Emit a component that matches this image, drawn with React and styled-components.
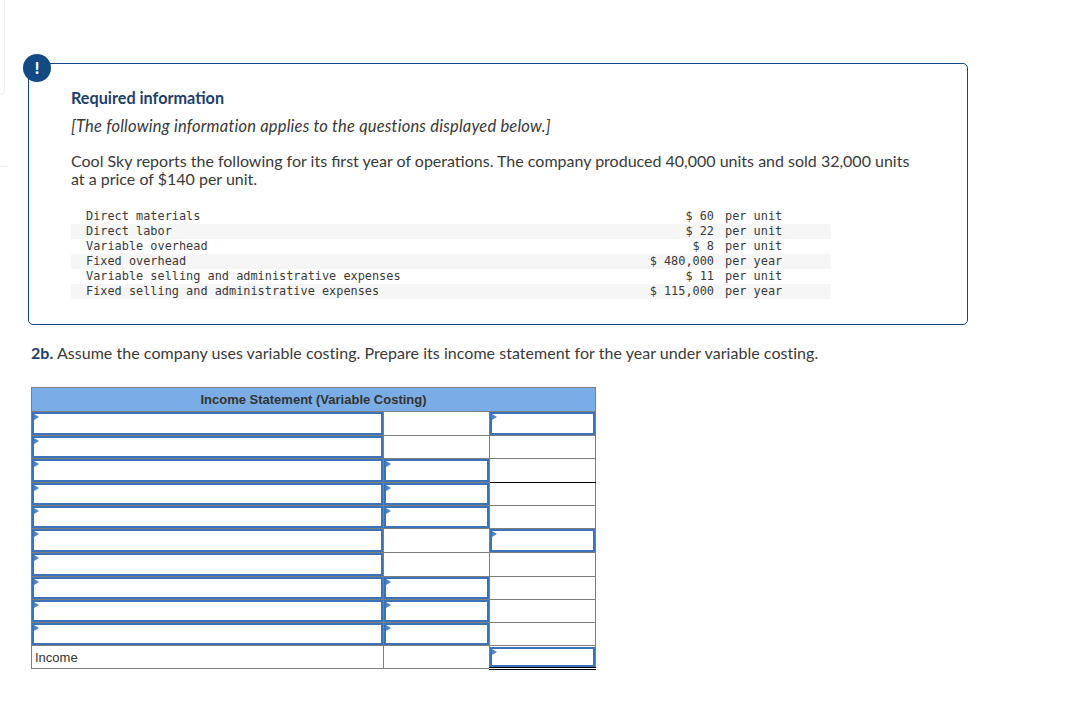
import styled, { createGlobalStyle } from 'styled-components';

const GlobalStyle = createGlobalStyle`
  html, body { margin: 0; background: #fff; }
  body { font-family: Lato, "Open Sans", sans-serif; color: #3a3a3a; }
`;

const Page = styled.div`
  position: relative;
  width: 1089px;
  height: 721px;
  box-sizing: border-box;
  padding: 63px 0 0 28px;
  overflow: hidden;
`;
const SideCard = styled.div`
  position: absolute;
  left: -10px;
  top: -10px;
  width: 13px;
  height: 103px;
  border: 1px solid #eee;
  border-radius: 5px;
`;
const SideRule = styled.div`
  position: absolute;
  left: 0;
  top: 166px;
  width: 8px;
  border-top: 1px solid #eee;
`;
const InfoBox = styled.section`
  position: relative;
  width: 940px;
  height: 262px;
  box-sizing: border-box;
  border: 1px solid #144a84;
  border-radius: 5px;
  padding: 25px 42px 0;
`;
const Badge = styled.div`
  position: absolute;
  left: -6px;
  top: -10px;
  width: 28px;
  height: 28px;
  border-radius: 50%;
  background: #144a84;
  color: #fff;
  font: 900 16px/28px Lato, sans-serif;
  text-align: center;
`;
const Heading = styled.h2`
  margin: 0;
  font-size: 16.2px;
  line-height: 18px;
  font-weight: 700;
  color: #1c3f6e;
`;
const Note = styled.p`
  margin: 10px 0 16px;
  font-size: 16.5px;
  line-height: 19px;
  letter-spacing: 0.2px;
  font-style: italic;
`;
const Body = styled.p`
  margin: 0 0 21px;
  font-size: 16px;
  line-height: 18px;
`;
const DataTable = styled.div`
  width: 760px;
  font: 11.88px/15px "DejaVu Sans Mono", monospace;
`;
const DataRow = styled.div`
  display: flex;
  height: 15px;
  padding-left: 15px;
  background: ${p => (p.$shade ? '#f6f6f6' : '#fff')};
  white-space: pre;
`;
const CostName = styled.span`
  flex: 1;
`;
const Amount = styled.span`
  text-align: right;
`;
const Unit = styled.span`
  width: 106px;
  margin-left: 11px;
`;
const Question = styled.p`
  margin: 18px 0 24px 3px;
  font-size: 16px;
  line-height: 20px;
  letter-spacing: 0.04px;
  b { font-weight: 700; color: #1c3f6e; }
`;
const Sheet = styled.table`
  border-collapse: collapse;
  table-layout: fixed;
  width: 564px;
  margin-left: 3px;
  font: 13px "Liberation Sans", Arial, sans-serif;
  color: #333;
`;
const Col = styled.col`
  width: ${p => p.$w}px;
`;
const HeadCell = styled.th`
  height: 23px;
  padding: 0;
  background: #7aade6;
  border: 1px solid #7f7f7f;
  font-size: 13px;
  font-weight: 700;
`;
const Cell = styled.td`
  height: ${p => p.$h}px;
  padding: 0;
  border: 1px solid #7f7f7f;
  ${p => p.$under && 'border-bottom-color: #000;'}
  ${p => p.$double && 'border-bottom: 3px double #000;'}
`;
const LabelCell = styled(Cell)`
  padding: 0 0 0 3px;
`;
const Entry = styled.div`
  position: relative;
  box-sizing: border-box;
  height: ${p => p.$h}px;
  border: 2px solid #3b73b9;
  &::before {
    content: '';
    position: absolute;
    left: 0;
    top: 0;
    border-left: 5px solid #4a86c8;
    border-top: 3.5px solid transparent;
    border-bottom: 3.5px solid transparent;
  }
`;

const costs = [
  ['Direct materials', '$ 60', 'per unit'],
  ['Direct labor', '$ 22', 'per unit'],
  ['Variable overhead', '$ 8', 'per unit'],
  ['Fixed overhead', '$ 480,000', 'per year'],
  ['Variable selling and administrative expenses', '$ 11', 'per unit'],
  ['Fixed selling and administrative expenses', '$ 115,000', 'per year'],
];

// which of the three columns take an answer, row by row
const rows = [
  { h: 23, cols: [1, 0, 1] },
  { h: 22, cols: [1, 0, 0] },
  { h: 23, cols: [1, 1, 0] },
  { h: 22, cols: [1, 1, 0] },
  { h: 22, cols: [1, 1, 0] },
  { h: 23, cols: [1, 0, 1] },
  { h: 23, cols: [1, 0, 0] },
  { h: 22, cols: [1, 1, 0] },
  { h: 22, cols: [1, 1, 0] },
  { h: 22, cols: [1, 1, 0] },
];

export default function App() {
  return (
    <Page>
      <GlobalStyle />
      <SideCard />
      <SideRule />
      <InfoBox>
        <Badge>!</Badge>
        <Heading>Required information</Heading>
        <Note>[The following information applies to the questions displayed below.]</Note>
        <Body>
          Cool Sky reports the following for its first year of operations. The company produced 40,000 units and sold 32,000 units
          <br />
          at a price of $140 per unit.
        </Body>
        <DataTable>
          {costs.map((c, i) => (
            <DataRow key={c[0]} $shade={i % 2 === 1}>
              <CostName>{c[0]}</CostName>
              <Amount>{c[1]}</Amount>
              <Unit>{c[2]}</Unit>
            </DataRow>
          ))}
        </DataTable>
      </InfoBox>
      <Question>
        <b>2b.</b> Assume the company uses variable costing. Prepare its income statement for the year under variable costing.
      </Question>
      <Sheet>
        <colgroup>
          <Col $w={352} />
          <Col $w={106} />
          <Col $w={106} />
        </colgroup>
        <thead>
          <tr>
            <HeadCell colSpan={3}>Income Statement (Variable Costing)</HeadCell>
          </tr>
        </thead>
        <tbody>
          {rows.map((r, i) => (
            <tr key={i}>
              {r.cols.map((on, c) => (
                <Cell key={c} $h={r.h} $under={i === 2 && c === 2}>
                  {on ? <Entry $h={r.h} /> : null}
                </Cell>
              ))}
            </tr>
          ))}
          <tr>
            <LabelCell $h={21}>Income</LabelCell>
            <Cell $h={21} />
            <Cell $h={21} $double>
              <Entry $h={20} />
            </Cell>
          </tr>
        </tbody>
      </Sheet>
    </Page>
  );
}
